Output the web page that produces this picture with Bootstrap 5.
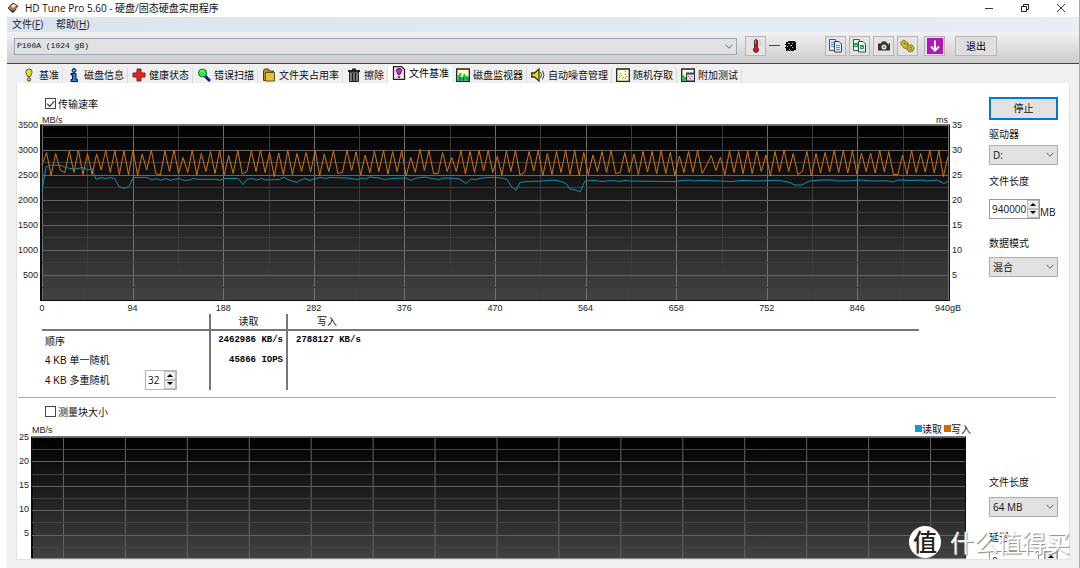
<!DOCTYPE html>
<html lang="zh-CN">
<head>
<meta charset="utf-8">
<meta name="viewport" content="width=device-width, initial-scale=1">
<title>HD Tune Pro 5.60 - 硬盘/固态硬盘实用程序</title>
<link href="https://cdn.jsdelivr.net/npm/bootstrap@5.3.0/dist/css/bootstrap.min.css" rel="stylesheet">
<style>
body{font:10px/14px "Open Sans","Noto Sans CJK SC",sans-serif;color:#111;background:#fff;overflow:hidden}
.app-window{margin-left:7px;border-right:1px solid #aaa;height:100vh;background:#f0f0f0}
.title-bar{height:17px;background:#fff}
.win-btn{width:36px;height:15px;padding:0;border:0;background:none;line-height:0}
.menu-bar{height:16px;background:linear-gradient(90deg,#dae3ef,#e8edf3);gap:13px;padding-left:5px}
.menu-bar a{color:#222;text-decoration:none}
.tool-bar{height:32px;background:linear-gradient(#f1f1f1,#cbcbcb);border-bottom:1px solid #444;padding:0 82px 2px 7px}
.clip-tools{gap:3px;margin-left:28px}
.drop{border:1px solid #adadad;border-radius:0;background-color:#e1e1e1;color:#111;padding:0 16px 0 3px;font:10px/14px "Open Sans","Noto Sans CJK SC",sans-serif;width:100%;height:20px;
 background-position:right 3px center;background-size:8px 5px;
 background-image:url("data:image/svg+xml,%3Csvg xmlns='http://www.w3.org/2000/svg' viewBox='0 0 8 5'%3E%3Cpath d='M.5.7 4 4.2 7.5.7' fill='none' stroke='%23666' stroke-width='1'/%3E%3C/svg%3E")}
.drop.drive{font:8px/12px "Liberation Mono","Noto Sans CJK SC",monospace;height:17px;padding-left:2px;border-color:#9aa7b5;background-color:#dfe1e3}
.tool-btn{width:21px;height:20px;padding:0;border:1px solid #b6b6b6;background:#e3e3e3;border-radius:0;line-height:0}
.tool-btn.wide{width:42px;line-height:14px;font-size:10px;background:#dedede;margin-left:10px}
.tab-strip{padding:4px 0 0 11px;border:0;height:19px}
.tab-strip .nav-link{border:0;border-right:1px solid #ddd;border-radius:0;padding:0 3px 0 4px;height:15px;line-height:15px;color:#111;background:#f0f0f0;margin:0;font-size:10px}
.tab-strip .nav-link svg{width:14px;height:14px;margin-right:3px;flex:none}
.tab-strip .nav-link.active{background:#fff;height:18px;margin-top:-3px;padding-top:1px;padding-bottom:2px;border-right:0}
.panel{margin:0 9px 8px;background:#fff;border:1px solid #e2e2e2;border-top:0;overflow:hidden;min-height:0}
.tick-row{height:14px;padding-left:28px;gap:2px}
.tick-row .form-check-input{width:11px;height:11px;border:1px solid #444;border-radius:0;margin:0;background-size:10px;background-color:#fff}
.tick-row .form-check-input:checked{background-image:url("data:image/svg+xml,%3Csvg xmlns='http://www.w3.org/2000/svg' viewBox='0 0 10 10'%3E%3Cpath d='M1.5 5 4 7.5 8.5 2.5' fill='none' stroke='%23333' stroke-width='1'/%3E%3C/svg%3E")}
.axis{font:9px/12px "Liberation Sans","Noto Sans CJK SC",sans-serif;color:#222}
.plot-grid{display:grid}
.plot-a{grid-template-columns:23px 1fr 39px;grid-template-rows:177px 13px}
.plot-b{grid-template-columns:14px 1fr 23px;grid-template-rows:123px}
.plot-grid svg{display:block;width:100%;height:100%}
.y-labels{display:flex;flex-direction:column;justify-content:space-between;margin:-5px 0;text-align:right;padding-right:2px}
.y-labels span{height:12px}
.y-labels.end{text-align:left;padding-left:2px}
.x-labels{display:flex;justify-content:space-between;padding:1px 2px 0;grid-column:2}
.x-labels span{width:0;display:flex;justify-content:center;white-space:nowrap}
.side{width:69px;flex:none;margin-right:11px}
.side label{display:block}
.btn-stop{border:2px solid #0078d7;background:#e1e1e1;border-radius:0;height:23px;width:100%;padding:0;font-size:10px;line-height:14px;color:#111}
.spin{border:1px solid #999;background:#fff;height:20px}
.spin input{border:0;outline:0;padding:0 0 0 2px;font:10px/14px "Open Sans",sans-serif;width:37px;background:none;min-width:0;color:#111}
.spin.small-spin{width:32px;border-color:#b5b5b5}
.spin.small-spin input{width:18px}
.spin button{display:block;width:12px;height:9px;padding:0;border:1px solid #bbb;background:#eee;line-height:0}
.results{width:calc(100% - 95px);margin-left:25px;font-family:"Liberation Sans","Noto Sans CJK SC",sans-serif}
.results th,.results td{padding:0;font-weight:400;height:20px}
.results thead th{height:16px;border-bottom:2px solid #777;line-height:13px}
.results .row-name{padding:3px 0 0 3px}
.results .figure-cell{font:bold 9px/12px "Liberation Mono",monospace;color:#000}
.results .bar-left{border-left:2px solid #777}
.divide{margin:7px 13px 7px 1px;border:0;border-top:1px solid #aaa;opacity:1}
.swatch{width:7px;height:7px;display:inline-block}
.watermark{position:absolute;right:10px;bottom:10px;gap:9px;color:#fff;font:24px/32px "Noto Sans CJK SC",sans-serif;text-shadow:1px 1px 1px #888;pointer-events:none}
.watermark b{width:32px;height:32px;border-radius:50%;background:#fff;color:#222;text-shadow:none;font:500 24px/30px "Noto Sans CJK SC",sans-serif;text-align:center}
</style>
</head>
<body>
<div class="app-window d-flex flex-column">
  <header class="title-bar d-flex align-items-center">
    <svg width="12" height="12" viewBox="0 0 12 12" class="me-1"><path d="M1 6 6 1l5 3-5 6z" fill="#a87943" stroke="#543"/><path d="M4 4 7 2l2 2-3 2z" fill="#eee"/><path d="M1 7l5 4 4-4-4 2z" fill="#222"/></svg>
    <span class="flex-grow-1" style="padding-left:2px">HD Tune Pro 5.60 - 硬盘/固态硬盘实用程序</span>
    <button class="win-btn" aria-label="最小化"><svg width="10" height="10"><path d="M1 5.500h8" stroke="#333"/></svg></button>
    <button class="win-btn" aria-label="还原"><svg width="10" height="10"><path d="M1.500 3.500h5v5h-5zM3.500 3v-1.500h5v5h-1.500" fill="none" stroke="#222"/></svg></button>
    <button class="win-btn" aria-label="关闭"><svg width="10" height="10"><path d="M1 1l8 8M9 1l-8 8" stroke="#333"/></svg></button>
  </header>
  <nav class="menu-bar d-flex align-items-center"><a href="#">文件(<u>F</u>)</a><a href="#">帮助(<u>H</u>)</a></nav>
  <div class="tool-bar d-flex align-items-center">
    <select class="form-select drop drive flex-grow-1 w-auto" aria-label="驱动器型号"><option>P100A (1024 gB)</option></select>
    <button class="tool-btn ms-2" aria-label="温度"><svg width="14" height="16" viewBox="0 0 14 16"><path d="M5.500 2.500q1.500-2 3 0v7q2 1.500.5 4-2 2-4 0-1.500-2.500.5-4z" fill="#d11" stroke="#333"/><path d="M6.500 2.500v3" stroke="#6cc"/><path d="M10 3h2M10 5h2M10 7h2" stroke="#bbb"/></svg></button>
    <svg width="28" height="12" viewBox="0 0 28 12" style="margin-left:3px" aria-hidden="true"><path d="M0 5.500h11" stroke="#444"/><path d="M17 2h2V1h7v1h1v8h-2v1h-3v-1l-1 1h-2v-1l-1 1h-1V8h-1V7h1V5h-1V4h1z" fill="#0a0a0a"/><path d="M19 3.500h2M23 3.500h1M21 5.500h2M23 7.500h1M18 6.500h1M20 9.500h1" stroke="#bbb"/></svg>
    <div class="clip-tools d-flex">
      <button class="tool-btn" aria-label="复制文本"><svg width="15" height="14" viewBox="0 0 15 14"><path d="M1.500.5h6v11h-6z" fill="#dbeaff" stroke="#555"/><path d="M6.500 2.500h4.500l2.500 2.500v8h-7z" fill="#dbeaff" stroke="#444"/><path d="M3 3.500h3M3 5.500h3M3 7.500h3M8 6.500h4M8 8.500h4M8 10.500h4" stroke="#4a9be0"/></svg></button>
      <button class="tool-btn" aria-label="复制图像"><svg width="15" height="14" viewBox="0 0 15 14"><path d="M1.500.5h6v11h-6z" fill="#dfe" stroke="#555"/><path d="M6.500 2.500h4.500l2.500 2.500v8h-7z" fill="#dfe" stroke="#444"/><path d="M2 4h4v4h-4zM8 6h4v4h-4z" fill="#2a4"/><path d="M3 6.500h2M9 8.500h2" stroke="#dd3"/></svg></button>
      <button class="tool-btn" aria-label="截图"><svg width="14" height="14" viewBox="0 0 14 14"><path d="M1 4.500h3l1-2h4l1 2h3v7H1z" fill="#333"/><circle cx="7" cy="8" r="2.500" fill="#eee"/><circle cx="7" cy="8" r="1.200" fill="#888"/><path d="M11 5.500h1" stroke="#5e5"/></svg></button>
      <button class="tool-btn" aria-label="选项"><svg width="15" height="14" viewBox="0 0 15 14"><path d="M1 3l3-2 4 3v2h4l2 3-1 3-4 1-2-3-3-1-3-3z" fill="#cdbf1e" stroke="#8d8212"/><circle cx="4.500" cy="4.500" r="1" fill="#665"/><circle cx="10.500" cy="9.500" r="1.300" fill="#ddd28a" stroke="#665"/><path d="M7.500 4.500v5" stroke="#887b10"/></svg></button>
    </div>
    <button class="tool-btn" style="margin-left:6px" aria-label="更新"><svg width="16" height="16" viewBox="0 0 16 16"><path d="M0 0h16v16H0z" fill="#b514b8"/><path d="M8 2.500v10M4 8.500l4 4 4-4" stroke="#fff" stroke-width="2" fill="none"/></svg></button>
    <button class="tool-btn wide">退出</button>
  </div>

  <ul class="nav nav-tabs tab-strip flex-nowrap text-nowrap" role="tablist">
    <li><button class="nav-link d-flex" role="tab"><svg viewBox="0 0 14 14"><path d="M7 1q3.500 0 3 3.500L8.500 8.500h-3L4 4.500Q3.500 1 7 1z" fill="#f2e51c" stroke="#554"/><circle cx="7" cy="11.500" r="1.700" fill="#dd1" stroke="#443"/></svg>基准</button></li>
    <li><button class="nav-link d-flex" role="tab"><svg viewBox="0 0 14 14"><circle cx="7" cy="2.500" r="2" fill="#29f" stroke="#124"/><path d="M4 5.500h5v6h1.500v2H4v-2h1.500V7H4z" fill="#18f" stroke="#013"/></svg>磁盘信息</button></li>
    <li><button class="nav-link d-flex" role="tab"><svg viewBox="0 0 14 14"><path d="M5 1h4v4h4v4H9v4H5V9H1V5h4z" fill="#e22" stroke="#722"/></svg>健康状态</button></li>
    <li><button class="nav-link d-flex" role="tab"><svg viewBox="0 0 14 14"><path d="M8 8l5 5" stroke="#11a" stroke-width="3"/><circle cx="5.500" cy="5" r="4" fill="#3e4" stroke="#263"/><path d="M3.500 4q1-2 3-1.500" stroke="#cfc" fill="none"/></svg>错误扫描</button></li>
    <li><button class="nav-link d-flex" role="tab"><svg viewBox="0 0 14 14"><path d="M1.500 2.500l1-1.500h4l1 2h4v9.500h-10z" fill="#b89010" stroke="#442"/><path d="M3.500 4.500h9v8.500h-9z" fill="#e6c02e" stroke="#552"/></svg>文件夹占用率</button></li>
    <li><button class="nav-link d-flex" role="tab"><svg viewBox="0 0 14 14"><path d="M1 2h12v2H1zM5 .5h4v2H5z" fill="#222"/><path d="M2.500 4h9v9.500h-9z" fill="#888" stroke="#222"/><path d="M5.500 5v8M8.500 5v8" stroke="#222" stroke-width="1.500"/></svg>擦除</button></li>
    <li><button class="nav-link active d-flex" role="tab" aria-selected="true"><svg viewBox="0 0 14 14"><path d="M1.500.5h8l3 3v10h-11z" fill="#eee" stroke="#222" stroke-width="1.300"/><path d="M7 2.500q3.500 0 2.500 3L8 8.500H6L4.500 5.500Q3.500 2.500 7 2.500z" fill="#c2c" stroke="#616"/><circle cx="7" cy="11" r="1.300" fill="#a1a"/></svg>文件基准</button></li>
    <li><button class="nav-link d-flex" role="tab"><svg viewBox="0 0 14 14"><path d="M.7 1h12.600v12.300H.7z" fill="#ffffc8" stroke="#222" stroke-width="1.300"/><path d="M1.300 12.700V7h2v-2h2v4h2V6h2v2h2v4.700z" fill="#1c2"/><path d="M4 12.700v-3M7.500 12.700v-4M12 12.700v-4" stroke="#14d" stroke-width="1.500"/></svg>磁盘监视器</button></li>
    <li><button class="nav-link d-flex" role="tab"><svg viewBox="0 0 14 14"><path d="M.7 5h2.800l4.500-4v12L3.500 9H.7z" fill="#e8d91c" stroke="#332" stroke-width="1.300"/><path d="M9.500 4q2 3 0 6M11.500 2.500q3 4.500 0 9" fill="none" stroke="#443"/></svg>自动噪音管理</button></li>
    <li><button class="nav-link d-flex" role="tab"><svg viewBox="0 0 14 14"><path d="M.7 1h12.600v12.300H.7z" fill="#ffffd8" stroke="#222" stroke-width="1.300"/><path d="M3 9.500h1M5 7.500h1M7 9.500h1M9 6.500h1M10 8.500h1M4 5.500h1M9 3.500h1" stroke="#e55"/><path d="M6 10.500h1M9 10.500h1M3 7.500h1" stroke="#e90"/></svg>随机存取</button></li>
    <li><button class="nav-link d-flex" role="tab"><svg viewBox="0 0 14 14"><path d="M.7 1h12.600v12.300H.7z" fill="#ffffc8" stroke="#222" stroke-width="1.300"/><path d="M1.300 12.700V7h2v2h2v3.700z" fill="#1c2"/><path d="M5.500 5.500h8v7.500h-8z" fill="#ddd" stroke="#226"/><path d="M5 5.500h9" stroke="#14a" stroke-width="2"/><path d="M7 8.500h1M9 10.500h1M10 8.500h1" stroke="#e33"/></svg>附加测试</button></li>
  </ul>

  <main class="panel flex-grow-1">
    <section class="d-flex" style="padding-top:14px">
      <div class="flex-grow-1">
        <div class="tick-row d-flex align-items-center"><input class="form-check-input" type="checkbox" id="rate" checked><label for="rate">传输速率</label></div>
        <div class="axis d-flex justify-content-between" style="padding:3px 41px 0 25px;margin-bottom:-2px"><span>MB/s</span><span>ms</span></div>
        <div class="plot-grid plot-a axis">
          <div class="y-labels"><span>3500</span><span>3000</span><span>2500</span><span>2000</span><span>1500</span><span>1000</span><span>500</span><span></span></div>
          <svg id="speedPlot" viewBox="0 0 910 177" preserveAspectRatio="none" role="img" aria-label="传输速率"></svg>
          <div class="y-labels end"><span>35</span><span>30</span><span>25</span><span>20</span><span>15</span><span>10</span><span>5</span><span></span></div>
          <div class="x-labels"><span>0</span><span>94</span><span>188</span><span>282</span><span>376</span><span>470</span><span>564</span><span>658</span><span>752</span><span>846</span><span>940gB</span></div>
        </div>
        <table class="results">
          <colgroup><col style="width:168px"><col style="width:77px"><col></colgroup>
          <thead><tr><th></th><th class="bar-left text-center">读取</th><th class="bar-left" style="padding-left:29px">写入</th></tr></thead>
          <tbody>
            <tr><th class="row-name" scope="row">顺序</th><td class="bar-left figure-cell text-end" style="padding-right:3px">2462986 KB/s</td><td class="bar-left figure-cell ps-2">2788127 KB/s</td></tr>
            <tr><th class="row-name" scope="row">4 KB 单一随机</th><td class="bar-left figure-cell text-end" style="padding-right:3px">45866 IOPS</td><td class="bar-left"></td></tr>
            <tr><th scope="row"><div class="d-flex align-items-center justify-content-between" style="padding:0 32px 0 0"><label class="row-name" for="depth">4 KB 多重随机</label>
              <span class="spin small-spin d-flex"><input id="depth" value="32"><span><button aria-label="增加"><svg width="6" height="4"><path d="M0 4l3-3 3 3z"/></svg></button><button aria-label="减少"><svg width="6" height="4"><path d="M0 0l3 3 3-3z"/></svg></button></span></span></div></th><td class="bar-left"></td><td class="bar-left"></td></tr>
          </tbody>
        </table>
      </div>
      <div class="side">
        <button class="btn-stop">停止</button>
        <label for="drv" class="mt-1 mb-1" style="padding-top:3px">驱动器</label>
        <select id="drv" class="form-select drop"><option>D:</option></select>
        <label for="len" style="margin:9px 0 11px">文件长度</label>
        <div class="d-flex align-items-end"><span class="spin d-flex"><input id="len" value="940000"><span><button aria-label="增加"><svg width="6" height="4"><path d="M0 4l3-3 3 3z"/></svg></button><button aria-label="减少"><svg width="6" height="4"><path d="M0 0l3 3 3-3z"/></svg></button></span></span><span>MB</span></div>
        <label for="mode" style="margin:17px 0 7px">数据模式</label>
        <select id="mode" class="form-select drop"><option>混合</option></select>
      </div>
    </section>
    <hr class="divide">
    <section class="d-flex">
      <div class="flex-grow-1">
        <div class="tick-row d-flex align-items-center"><input class="form-check-input" type="checkbox" id="block"><label for="block">测量块大小</label></div>
        <div class="d-flex justify-content-between align-items-end" style="padding:3px 18px 0 15px"><span class="axis">MB/s</span>
          <span class="d-flex align-items-center"><i class="swatch" style="background:#0a9fd6"></i>读取<i class="swatch" style="background:#cf6a08;margin-left:2px"></i>写入</span></div>
        <div class="plot-grid plot-b axis">
          <div class="y-labels"><span>25</span><span>20</span><span>15</span><span>10</span><span>5</span><span></span></div>
          <svg id="blockPlot" viewBox="0 0 936 123" preserveAspectRatio="none" role="img" aria-label="测量块大小"></svg>
        </div>
      </div>
      <div class="side" style="padding-top:70px">
        <label for="len2" class="mb-2">文件长度</label>
        <select id="len2" class="form-select drop"><option>64 MB</option></select>
        <label for="delay" style="margin:13px 0 7px">延迟</label>
        <div class="d-flex justify-content-between"><span class="spin d-flex"><input id="delay" value="0" style="width:48px"></span><span class="spin"><button aria-label="增加"><svg width="6" height="4"><path d="M0 4l3-3 3 3z"/></svg></button><button aria-label="减少"><svg width="6" height="4"><path d="M0 0l3 3 3-3z"/></svg></button></span></div>
      </div>
    </section>
  </main>
</div>
<div class="watermark d-flex align-items-center"><b>值</b><span>什么值得买</span></div>

<script src="https://cdn.jsdelivr.net/npm/bootstrap@5.3.0/dist/js/bootstrap.bundle.min.js"></script>
<script>
// Write speed, MB/s, at evenly spaced positions over the file.
const write=[2700,2950,2490,2930,2600,2545,2980,2550,3000,2510,2930,2510,2920,2600,2990,2550,2990,2510,2985,2510,3000,2490,2920,2600,3000,2530,2500,2980,2570,3000,2530,2850,2550,2990,2500,2930,2570,2970,2530,2990,2500,2890,2530,2990,2520,2570,2985,2570,3000,2550,2950,2470,2940,2510,2990,2510,2930,
2570,2950,2560,2990,2490,2920,2570,2980,2530,2555,2990,2590,2960,2500,2900,2545,2980,2570,2990,2520,2970,2570,2990,2480,2850,2555,3010,2590,2990,2530,2530,2950,2570,2850,2570,2990,2520,2970,2550,2990,2580,2990,2550,2870,2500,2980,2570,2990,2500,2550,2970,2580,2990,2480,2930,2510,2970,
2550,2990,2510,2990,2490,2950,2510,2900,2570,2970,2550,2990,2530,2550,2950,2550,2920,2510,2970,2560,2970,2530,2990,2530,2950,2500,2880,2550,2970,2550,3000,2530,2700,2890,2590,2850,2510,2980,2550,2970,2530,2980,2530,2970,2570,2900,2480,2970,2570,3000,2570,2930,2510,2570,2970,
2480,2930,2540,2950,2560,2990,2550,2990,2540,2990,2520,2940,2570,2940,2540,2990,2560,2970,2510,2510,2900,2515,2990,2550,2930,2560,2990,2540,2990,2470,2870];
// Read speed as [position, MB/s]; positions run from 0 to 906.
const read=[[0,2180],[4,2660],[9,2700],[19,2690],[24,2650],[32,2615],[40,2650],[46,2605],[50,2630],[54,2415],[59,2450],[63,2430],[69,2450],[73,2420],[77,2270],[82,2230],[87,2270],[91,2440],[95,2455],[105,2450],[110,2400],[114,2430],[119,2395],[124,2430],[128,2395],[137,2430],[142,2395],[146,2395],[151,2430],[155,2415],[174,2415],[178,2395],[183,2430],[196,2430],[201,2310],[205,2410],[210,2430],[215,2400],[219,2430],[224,2400],[237,2410],[242,2455],[247,2400],[255,2350],[258,2395],[263,2430],[268,2390],[273,2430],[279,2450],[283,2430],[288,2450],[305,2440],[315,2410],[320,2440],[323,2420],[328,2460],[337,2440],[342,2410],[350,2430],[364,2440],[369,2395],[375,2440],[383,2460],[390,2430],[397,2410],[402,2440],[416,2430],[419,2400],[424,2330],[429,2420],[434,2410],[440,2440],[450,2455],[460,2440],[465,2410],[469,2280],[474,2190],[478,2350],[485,2370],[500,2380],[510,2400],[518,2380],[524,2330],[528,2220],[534,2200],[538,2160],[543,2380],[553,2390],[560,2370],[570,2390],[578,2370],[583,2395],[588,2380],[628,2370],[633,2370],[640,2390],[647,2400],[652,2380],[660,2395],[690,2370],[700,2390],[715,2380],[735,2395],[740,2380],[748,2350],[752,2300],[760,2300],[767,2380],[780,2400],[791,2400],[796,2380],[810,2385],[818,2400],[830,2380],[845,2385],[851,2360],[856,2400],[870,2390],[880,2400],[885,2380],[895,2400],[902,2330],[906,2380]];
const line=(x1,y1,x2,y2,c)=>`<path d="M${x1} ${y1}L${x2} ${y2}" stroke="${c}" vector-effect="non-scaling-stroke"/>`;
const back=(id,w,h)=>`<defs><linearGradient id="${id}" x2="0" y2="1"><stop stop-color="#000"/><stop offset="1" stop-color="#424242"/></linearGradient></defs><rect width="${w}" height="${h}" fill="#0c0c0c"/><rect x="2" y="2" width="${w-3}" height="${h-3}" fill="url(#${id})"/>`;
let s=back("ga",910,177);
for(let i=0;i<=20;i++){const x=Math.round(2+i*45.3)+.5;s+=line(x,1,x,176,i%2?"#3c3c3c":"#707070")}
for(let i=0;i<14;i++){const y=Math.floor(1+i*12.5)+.5;s+=line(2,y,908,y,i%2?"#3c3c3c":"#666")}
const pts=a=>a.map(([x,v])=>(2+x).toFixed(1)+","+(176-v/20).toFixed(1)).join(" ");
const curve=(a,c)=>`<polyline points="${pts(a)}" fill="none" stroke="${c}" vector-effect="non-scaling-stroke"/>`;
s+=curve(write.map((v,i)=>[i*906/(write.length-1),v]),"#d9730c")+curve(read,"#0d8fbd")+line(0,.5,910,.5,"#777");
document.getElementById("speedPlot").innerHTML=s;
let b=back("gb",936,123);
for(let i=0;i<15;i++){const x=32.5+i*62;b+=line(x,1,x,122,"#636363")}
for(let i=0;i<10;i++){const y=Math.round(i*12.2)+1.5;b+=line(1,y,935,y,i%2?"#424242":"#636363")}
b+=line(0,.5,936,.5,"#777")+line(0,122.5,936,122.5,"#888");
document.getElementById("blockPlot").innerHTML=b;
</script>
</body>
</html>
